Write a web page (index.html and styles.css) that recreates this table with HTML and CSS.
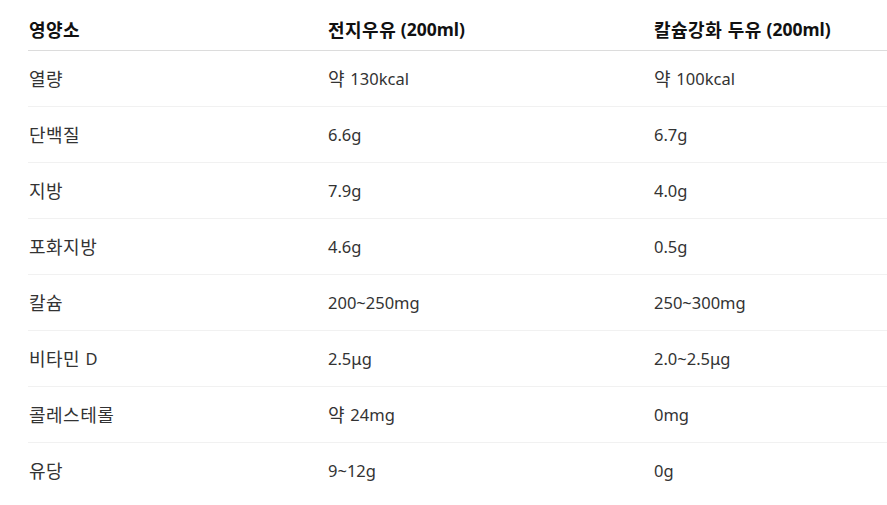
FILE: index.html
```html
<!DOCTYPE html>
<html lang="ko">
<head>
<meta charset="utf-8">
<link rel="stylesheet" href="styles.css">
</head>
<body>
<div class="wrap">
<table class="nt">
<colgroup><col class="c1"><col class="c2"><col class="c3"></colgroup>
<thead>
<tr><th><span class="k">영양소</span></th><th><span class="k">전지우유</span> (200ml)</th><th><span class="k">칼슘강화 두유</span> (200ml)</th></tr>
</thead>
<tbody>
<tr><td><span class="k">열량</span></td><td><span class="k">약</span> 130kcal</td><td><span class="k">약</span> 100kcal</td></tr>
<tr><td><span class="k">단백질</span></td><td>6.6g</td><td>6.7g</td></tr>
<tr><td><span class="k">지방</span></td><td>7.9g</td><td>4.0g</td></tr>
<tr><td><span class="k">포화지방</span></td><td>4.6g</td><td>0.5g</td></tr>
<tr><td><span class="k">칼슘</span></td><td>200~250mg</td><td>250~300mg</td></tr>
<tr><td><span class="k">비타민</span> D</td><td>2.5μg</td><td>2.0~2.5μg</td></tr>
<tr><td><span class="k">콜레스테롤</span></td><td><span class="k">약</span> 24mg</td><td>0mg</td></tr>
<tr><td><span class="k">유당</span></td><td>9~12g</td><td>0g</td></tr>
</tbody>
</table>
</div>
</body>
</html>
```
FILE: styles.css
```css
html, body { margin: 0; padding: 0; background: #fff; }
body { font-family: "Noto Sans", "Noto Sans CJK KR", sans-serif; }
.wrap { padding: 9px 0 0 28px; overflow: hidden; }
.nt { border-collapse: collapse; width: 859px; table-layout: fixed; }
.c1 { width: 299px; }
.c2 { width: 326px; }
.c3 { width: 234px; }
.nt th { text-align: left; font-weight: 700; font-size: 17.5px; color: #111; padding: 11px 0 11px 1px; height: 19px; line-height: 19px; border-bottom: 1px solid #dcdcdc; white-space: nowrap; }
.nt td { text-align: left; font-size: 16.5px; color: #333; padding: 18px 0 18px 1px; height: 19px; line-height: 19px; border-bottom: 1px solid #f1f1f1; white-space: nowrap; }
.nt tbody tr:last-child td { border-bottom: none; }
.k { font-family: "Noto Sans CJK KR", sans-serif; font-size: 18px; letter-spacing: 0.5px; line-height: 1; vertical-align: -1px; }
.nt td .k { margin-right: 1px; }
```
